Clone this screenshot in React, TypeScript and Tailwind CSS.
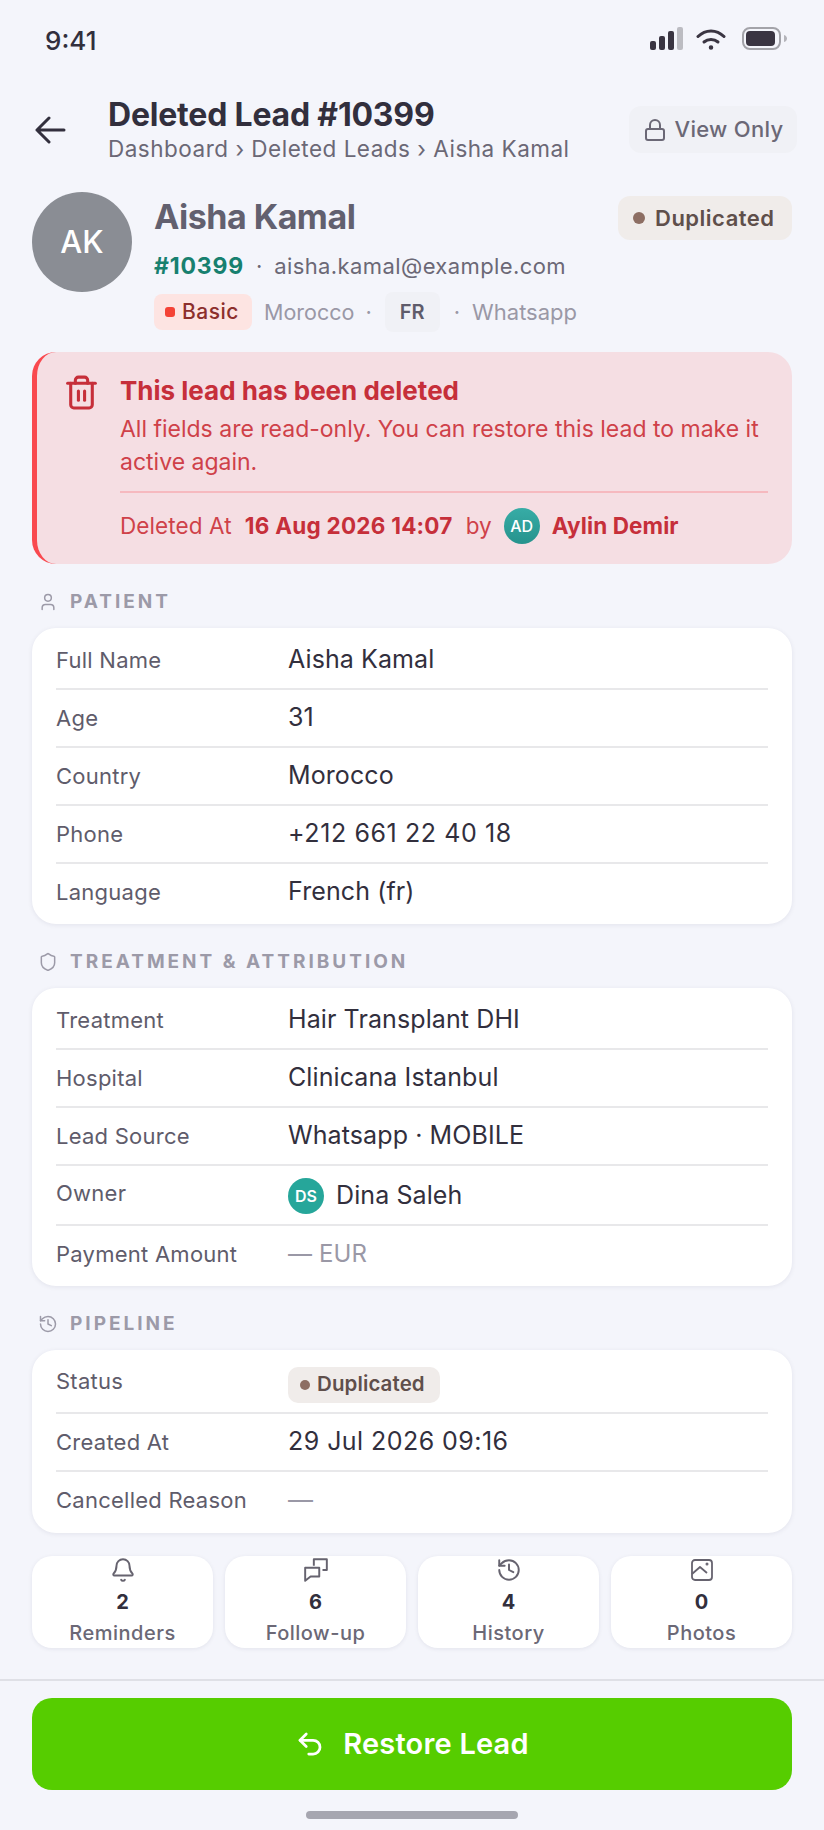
import React from "react";
import { Lock, Trash2, User, Shield, History, Bell, Undo2 } from "lucide-react";

const Row = ({ label, children, last, h = "h-[58px]", labelUp }: { label: string; children: React.ReactNode; last?: boolean; h?: string; labelUp?: boolean }) => (
  <div className={`flex items-center ${h} ${last ? "" : "border-b-2 border-[#e8e8ea]"}`}>
    <div className={`w-[232px] text-[22px] text-[#5f5c6b] tracking-[0.25px] ${labelUp ? "mt-[-4px]" : ""}`}>{label}</div>
    <div className="text-[25px] text-[#322f3d] tracking-[0.1px] flex items-center">{children}</div>
  </div>
);

const Section = ({ icon, title }: { icon: React.ReactNode; title: string }) => (
  <div className="flex items-center h-[28px] text-[#9c9aa8] gap-[12px] pl-[6px]">
    <span className="w-[20px] flex justify-center">{icon}</span>
    <span className="text-[19px] font-bold tracking-[3px]">{title}</span>
  </div>
);

const Tile = ({ icon, n, label }: { icon: React.ReactNode; n: string; label: string }) => (
  <div className="flex-1 h-[92px] bg-white rounded-[20px] shadow-[0_1px_4px_rgba(30,30,60,0.08)] flex flex-col items-center text-[#322f3d]">
    <div className="h-[26px] mt-[1px] flex items-center text-[#66636f]">{icon}</div>
    <div className="text-[20px] font-bold leading-[24px] mt-[7px]">{n}</div>
    <div className="text-[20px] font-medium text-[#6b6876] tracking-[0.5px] leading-[26px] mt-[6px]">{label}</div>
  </div>
);

const Card = ({ children }: { children: React.ReactNode }) => (
  <div className="bg-white rounded-[24px] px-[24px] pt-[4px] pb-[4px] shadow-[0_1px_5px_rgba(30,30,60,0.08)]">{children}</div>
);

const DupBadge = ({ small }: { small?: boolean }) => small ? (
  <div className="h-[36px] w-[152px] rounded-[10px] bg-[#f0ecea] flex items-center pl-[12px] gap-[7px] text-[20.5px] font-semibold text-[#5f4f4b] mt-[3px]">
    <span className="w-[10px] h-[10px] rounded-full bg-[#8d6e63]" />Duplicated
  </div>
) : (
  <div className="h-[44px] w-[174px] rounded-[12px] bg-[#f0ecea] flex items-center pl-[15px] gap-[10px] text-[22px] font-semibold tracking-[0.5px] text-[#5f4f4b] mt-[4px]">
    <span className="w-[12px] h-[12px] rounded-full bg-[#8d6e63]" />Duplicated
  </div>
);

export default function App() {
  return (
    <div className="w-[824px] h-[1830px] bg-[#f4f5fb] flex flex-col overflow-hidden text-[#322f3d]" style={{ fontFamily: "Inter, sans-serif" }}>
      <div className="h-[80px] pl-[45px] pr-[36px] flex items-center justify-between shrink-0">
        <span className="text-[26px] font-medium text-[#322f3d]">9:41</span>
        <div className="flex items-center gap-[12px] mt-[-3px]">
          <svg width="35" height="23" viewBox="0 0 35 23">
            <rect x="1" y="14" width="6" height="9" rx="2" fill="#3a3542" />
            <rect x="10" y="9" width="6" height="14" rx="2" fill="#3a3542" />
            <rect x="19" y="4" width="6" height="19" rx="2" fill="#3a3542" />
            <rect x="28" y="0" width="6" height="23" rx="2" fill="#bcbcc2" />
          </svg>
          <svg width="30" height="22" viewBox="0 0 30 22" fill="none" stroke="#3a3542" strokeWidth="3" strokeLinecap="round">
            <path d="M2 8.500C9.500 1 20.500 1 28 8.500" />
            <path d="M8 14C12 10.500 18 10.500 22 14" />
            <circle cx="15" cy="19.500" r="1.500" fill="#3a3542" strokeWidth="1.500" />
          </svg>
          <svg width="50" height="23" viewBox="0 0 50 23">
            <rect x="5" y="1" width="37" height="21" rx="7" fill="none" stroke="#a3a3a9" strokeWidth="2" />
            <rect x="8" y="4" width="29" height="15" rx="4" fill="#3a3542" />
            <path d="M46 8c2 .5 3 2 3 3.500s-1 3-3 3.500z" fill="#b4b4ba" />
          </svg>
        </div>
      </div>

      <div className="flex items-start h-[68px] mt-[15px] pl-[35px] pr-[27px] shrink-0">
        <svg width="31" height="28" viewBox="0 0 31 28" fill="none" stroke="#322f3d" strokeWidth="3" strokeLinecap="round" strokeLinejoin="round" className="mt-[21px]">
          <path d="M29 14H2M14 2 2 14l12 12" />
        </svg>
        <div className="ml-[42px] flex-1 pt-[1px]">
          <div className="text-[32px] font-bold leading-[38px] tracking-[-0.2px]">Deleted Lead #10399</div>
          <div className="text-[22.5px] leading-[29px] text-[#6b6876] tracking-[0.5px] whitespace-nowrap">Dashboard › Deleted Leads › Aisha Kamal</div>
        </div>
        <div className="h-[47px] w-[168px] rounded-[12px] bg-[#f0f1f6] flex items-center justify-center gap-[8px] text-[22px] font-medium tracking-[0.3px] text-[#6b6876] mt-[11px]">
          <Lock size={24} strokeWidth={2} />View Only
        </div>
      </div>

      <div className="flex pl-[32px] pr-[32px] mt-[29px] h-[140px] shrink-0">
        <div className="w-[100px] h-[100px] rounded-full bg-[#8a8d94] text-white flex items-center justify-center text-[31px] font-medium">AK</div>
        <div className="ml-[22px] flex-1 pt-[3px]">
          <div className="text-[34px] font-bold leading-[44px] tracking-[-0.5px] text-[#62606f]">Aisha Kamal</div>
          <div className="flex items-center h-[30px] mt-[12px] text-[22px]">
            <span className="font-bold text-[#17806f] text-[23px] tracking-[0.8px]">#10399</span>
            <span className="mx-[12px] text-[#6b6876]">·</span>
            <span className="text-[#6b6876] tracking-[0.4px]">aisha.kamal@example.com</span>
          </div>
          <div className="flex items-center h-[40px] mt-[11px] text-[22px] text-[#9a98a6]">
            <div className="h-[36px] w-[98px] rounded-[8px] bg-[#fde4e2] flex items-center pl-[11px] gap-[7px] text-[21px] font-medium tracking-[0.5px] text-[#8c2f2c]">
              <span className="w-[10px] h-[10px] rounded-[3px] bg-[#f44336]" />Basic
            </div>
            <span className="ml-[12px] text-[21.5px]">Morocco</span>
            <span className="ml-[11px]">·</span>
            <div className="ml-[13px] h-[40px] w-[55px] rounded-[8px] bg-[#f0f1f6] flex items-center justify-center text-[20px] font-semibold text-[#5f5c6b]">FR</div>
            <span className="ml-[14px]">·</span>
            <span className="ml-[12px]">Whatsapp</span>
          </div>
        </div>
        <DupBadge />
      </div>

      <div className="mx-[32px] mt-[20px] h-[212px] shrink-0 rounded-[24px] bg-[#f5dee3] border-l-[5px] border-[#f9494f] pt-[24px] flex">
        <div className="w-[83px] flex justify-center shrink-0"><Trash2 size={37} strokeWidth={2} className="text-[#c62f3a] ml-[6px] mt-[-2px]" /></div>
        <div className="flex-1 pr-[24px]">
          <div className="text-[26px] font-bold text-[#c62f3a] leading-[30px]">This lead has been deleted</div>
          <div className="text-[23px] text-[#cf4149] leading-[33px] mt-[7px]">All fields are read-only. You can restore this lead to make it active again.</div>
          <div className="border-t-2 border-[#f6b9bf] mt-[12px] pt-[15px] flex items-center text-[22.5px] text-[#cf4149]">
            <span className="tracking-[0.1px]">Deleted At</span>
            <span className="font-bold text-[#c62f3a] ml-[13px] tracking-[0.25px]">16 Aug 2026 14:07</span>
            <span className="ml-[13px]">by</span>
            <span className="ml-[12px] w-[36px] h-[36px] rounded-full bg-gradient-to-b from-[#37aca6] to-[#26938d] text-white text-[16px] font-medium flex items-center justify-center">AD</span>
            <span className="font-bold text-[#c62f3a] ml-[12px] tracking-[0.1px]">Aylin Demir</span>
          </div>
        </div>
      </div>

      <div className="mx-[32px] mt-[24px]"><Section icon={<User size={24} strokeWidth={1.8} />} title="PATIENT" /></div>
      <div className="mx-[32px] mt-[12px]">
        <Card>
          <Row label="Full Name">Aisha Kamal</Row>
          <Row label="Age">31</Row>
          <Row label="Country">Morocco</Row>
          <Row label="Phone"><span className="tracking-[0.6px]">+212 661 22 40 18</span></Row>
          <Row label="Language" last h="h-[56px]">French (fr)</Row>
        </Card>
      </div>

      <div className="mx-[32px] mt-[24px]"><Section icon={<Shield size={24} strokeWidth={1.8} />} title="TREATMENT & ATTRIBUTION" /></div>
      <div className="mx-[32px] mt-[12px]">
        <Card>
          <Row label="Treatment">Hair Transplant DHI</Row>
          <Row label="Hospital">Clinicana Istanbul</Row>
          <Row label="Lead Source">Whatsapp · MOBILE</Row>
          <Row label="Owner" h="h-[60px]" labelUp>
            <span className="w-[36px] h-[36px] rounded-full bg-[#26a69a] text-white text-[16px] font-semibold flex items-center justify-center mr-[12px] mt-[1px]">DS</span><span className="mt-[1px]">Dina Saleh</span>
          </Row>
          <Row label="Payment Amount" last h="h-[56px]"><span className="text-[#9a98a6] text-[24px]">— EUR</span></Row>
        </Card>
      </div>

      <div className="mx-[32px] mt-[24px]"><Section icon={<History size={24} strokeWidth={1.8} />} title="PIPELINE" /></div>
      <div className="mx-[32px] mt-[12px]">
        <Card>
          <Row label="Status" h="h-[60px]" labelUp><DupBadge small /></Row>
          <Row label="Created At"><span className="tracking-[0.45px]">29 Jul 2026 09:16</span></Row>
          <Row label="Cancelled Reason" last h="h-[57px]"><span className="text-[#9a98a6]">—</span></Row>
        </Card>
      </div>

      <div className="mx-[32px] mt-[23px] flex gap-[12px]">
        <Tile icon={<Bell size={26} strokeWidth={1.8} />} n="2" label="Reminders" />
        <Tile icon={<svg width="26" height="26" viewBox="0 0 24 24" fill="none" stroke="currentColor" strokeWidth="1.8" strokeLinejoin="round"><path d="M10 8V2h12v10h-4" /><path d="M2 10h13v8H7l-5 4z" /></svg>} n="6" label="Follow-up" />
        <Tile icon={<History size={26} strokeWidth={1.8} />} n="4" label="History" />
        <Tile icon={<svg width="24" height="24" viewBox="0 0 24 24" fill="none" stroke="currentColor" strokeWidth="1.8" strokeLinejoin="round"><rect x="2" y="2" width="20" height="20" rx="3" /><path d="M2 16l8-7 7 6" /><circle cx="17" cy="6" r="0.6" /></svg>} n="0" label="Photos" />
      </div>

      <div className="mt-auto border-t-2 border-[#dfe0e6] h-[151px] shrink-0 px-[32px] pt-[17px]">
        <button className="w-full h-[92px] rounded-[20px] bg-[#56cd00] text-white text-[29px] font-semibold tracking-[0.2px] flex items-center justify-center gap-[18px]">
          <Undo2 size={30} strokeWidth={2.2} />Restore Lead
        </button>
        <div className="w-[212px] h-[8px] rounded-full bg-[#a6a6b0] mx-auto mt-[21px]" />
      </div>
    </div>
  );
}
